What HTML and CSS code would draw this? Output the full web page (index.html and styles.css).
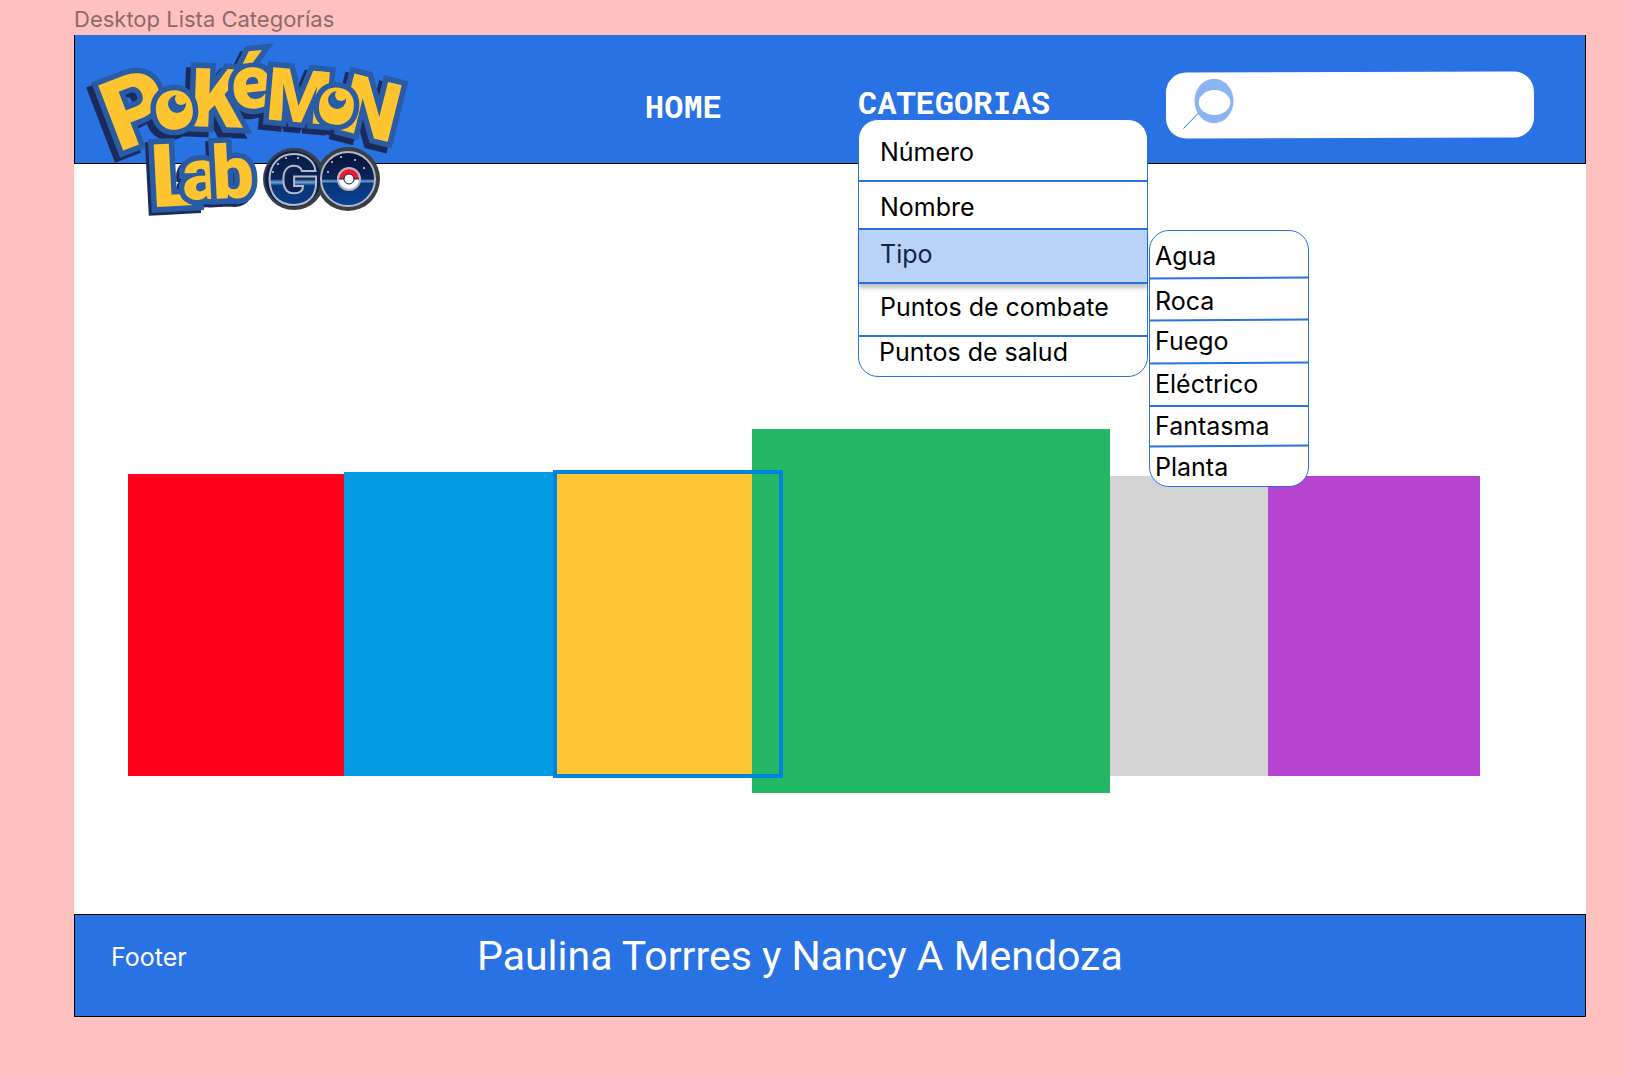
FILE: index.html
```html
<!DOCTYPE html>
<html lang="es">
<head>
<meta charset="utf-8">
<meta name="viewport" content="width=device-width, initial-scale=1">
<title>Desktop Lista Categorías</title>
<link rel="stylesheet" href="styles.css">
</head>
<body>
<p class="frame-label">Desktop Lista Categorías</p>
<div class="frame">
  <header class="header">
    <a class="logo" href="#" aria-label="Pokémon Lab GO">
      <svg class="logo-art" viewBox="86 35 320 182" width="320" height="182">
        <defs>
          <linearGradient id="night" x1="0" y1="0" x2="0" y2="1">
            <stop offset="0" stop-color="#06143a"/>
            <stop offset=".5" stop-color="#0a2558"/>
            <stop offset=".54" stop-color="#6fa6dc"/>
            <stop offset=".58" stop-color="#0a3674"/>
            <stop offset="1" stop-color="#05409a"/>
          </linearGradient>
          <g id="top-word">
            <text transform="translate(148 141) rotate(-21)" font-size="98">P</text>
            <text transform="translate(216 127) rotate(2)" font-size="82">K</text>
            <text transform="translate(177 129) rotate(-8)" font-size="72">o</text>
            <text transform="translate(254 108) rotate(-6)" font-size="76">é</text>
            <text transform="translate(297 122) rotate(5)" font-size="74">M</text>
            <text transform="translate(364 136) rotate(14)" font-size="82">N</text>
            <text transform="translate(334 124) rotate(8)" font-size="68">o</text>
          </g>
          <g id="lab-word">
            <text transform="translate(176 206) rotate(-3)" font-size="88">L</text>
            <text transform="translate(202 199) rotate(-2)" font-size="72">a</text>
            <text transform="translate(234 198) rotate(-3)" font-size="74">b</text>
          </g>
        </defs>
        <g class="word-depth">
          <use href="#top-word" x="-5" y="5"/>
          <use href="#lab-word" x="-3" y="3"/>
        </g>
        <g class="word-face">
          <use href="#top-word"/>
          <use href="#lab-word"/>
        </g>
        <g>
          <ellipse cx="176" cy="109" rx="14" ry="15" fill="#ffc531"/>
          <circle cx="177" cy="104" r="9" fill="#2a5ca5"/>
          <circle cx="181" cy="99" r="6" fill="#ffc531"/>
          <ellipse cx="337" cy="105" rx="13" ry="15" fill="#ffc531"/>
          <circle cx="337" cy="100" r="9" fill="#2a5ca5"/>
          <circle cx="341" cy="95" r="6" fill="#ffc531"/>
        </g>
        <circle cx="294" cy="179" r="31" fill="#3a3f45"/>
        <circle cx="348" cy="179" r="32" fill="#3a3f45"/>
        <circle cx="293" cy="179" r="28" fill="#0a2050"/>
        <circle cx="348" cy="179" r="27" fill="url(#night)" stroke="#b4bac4" stroke-width="2"/>
        <text class="go-letter" x="293" y="204" font-size="68">G</text>
        <g fill="#c9d8f0">
          <circle cx="278" cy="164" r="1"/><circle cx="286" cy="158" r="1"/><circle cx="298" cy="158" r="1"/>
          <circle cx="273" cy="172" r="1"/><circle cx="332" cy="162" r="1"/><circle cx="341" cy="157" r="1"/>
          <circle cx="355" cy="160" r="1"/><circle cx="364" cy="168" r="1"/><circle cx="328" cy="172" r="1"/>
        </g>
        <circle cx="349" cy="179" r="11" fill="#fff" stroke="#b4bac4" stroke-width="2"/>
        <path d="M339 179a10 10 0 0 1 20 0z" fill="#f0182c"/>
        <path d="M339 179h20" stroke="#0a2050"/>
        <circle cx="349" cy="179" r="5" fill="#fff" stroke="#0a2050"/>
      </svg>
    </a>
    <a class="nav-link" href="#">HOME</a>
    <nav class="categories">
      <a class="nav-link" href="#">CATEGORIAS</a>
      <ul class="menu">
        <li class="menu-row row-tall"><a href="#">Número</a></li>
        <li class="menu-row row-short"><a href="#">Nombre</a></li>
        <li class="menu-row row-active"><a href="#">Tipo</a></li>
        <li class="menu-row row-raised"><a href="#">Puntos de combate</a></li>
        <li class="menu-row row-last"><a href="#">Puntos de salud</a></li>
      </ul>
      <ul class="submenu">
        <li class="type-row type-first"><a href="#">Agua</a></li>
        <li class="type-row type-second"><a href="#">Roca</a></li>
        <li class="type-row"><a href="#">Fuego</a></li>
        <li class="type-row type-level"><a href="#">Eléctrico</a></li>
        <li class="type-row type-small"><a href="#">Fantasma</a></li>
        <li class="type-row type-last"><a href="#">Planta</a></li>
      </ul>
    </nav>
    <form class="search">
      <input class="search-input" type="search" aria-label="Buscar">
      <svg class="search-icon" viewBox="0 0 52 52" width="52" height="52" aria-hidden="true">
        <ellipse cx="31" cy="23" rx="19.500" ry="22.300" fill="#8cb4f3"/>
        <ellipse cx="31.500" cy="24.500" rx="15.800" ry="12.500" fill="#fff"/>
        <path d="M.5 50.500L15.500 35" stroke="#2872e4" fill="none"/>
      </svg>
    </form>
  </header>
  <main class="gallery">
    <div class="card card-red"></div>
    <div class="card card-blue"></div>
    <div class="card card-yellow"></div>
    <div class="card card-green"></div>
    <div class="card card-gray"></div>
    <div class="card card-purple"></div>
  </main>
  <footer class="footer">
    <span class="footer-label">Footer</span>
    <span class="footer-authors">Paulina Torrres y Nancy A Mendoza</span>
  </footer>
</div>
</body>
</html>
```
FILE: styles.css
```css
* {
  box-sizing: border-box;
}

body {
  margin: 0;
  padding: 0 40px 56px 74px;
  background: #ffc0c0;
  color: #000;
  font-family: Inter, "Liberation Sans", sans-serif;
  font-size: 25px;
  line-height: 30px;
}

a {
  color: inherit;
  text-decoration: none;
}

ul {
  margin: 0;
  padding: 0;
  list-style: none;
}

.frame-label {
  margin: 0;
  padding-top: 4px;
  height: 35px;
  font-size: 22px;
  color: #8d6a6a;
}

.frame {
  background: #fff;
}

.header {
  display: grid;
  grid-template-columns: 570fr 213fr 308fr 419fr;
  height: 129px;
  border: 1px solid #000;
  border-top: 0;
  background: #2872e4;
}

.logo {
  padding-left: 11px;
}

.logo-art {
  display: block;
  position: relative;
  z-index: 1;
  overflow: visible;
}

.logo-art text {
  font-family: Roboto, "Liberation Sans", sans-serif;
  font-weight: 900;
  text-anchor: middle;
}

.word-depth {
  fill: #1b2a5c;
  stroke: #1b2a5c;
  stroke-width: 11px;
}

.word-face {
  fill: #ffc531;
  stroke: #2a5ca5;
  stroke-width: 11px;
  paint-order: stroke;
}

.logo-art .go-letter {
  font-family: Inter, sans-serif;
  fill: url(#night);
  stroke: #b4bac4;
  stroke-width: 2px;
}

.nav-link {
  padding-top: 51px;
  font-family: "Roboto Mono", "DejaVu Sans Mono", monospace;
  font-size: 32px;
  font-weight: 700;
  line-height: 40px;
  color: #fff;
}

.categories {
  position: relative;
  padding-top: 47px;
}

.menu,
.submenu {
  position: absolute;
  border: 1px solid #2872e4;
  border-radius: 20px;
  background: #fff;
}

.menu {
  top: 84px;
  left: 0;
  z-index: 2;
  width: 290px;
}

.submenu {
  top: 195px;
  left: 291px;
  z-index: 2;
  width: 160px;
}

.menu-row {
  display: flex;
  align-items: center;
  height: 53px;
  padding: 0 21px;
  border-bottom: 2px solid #2872e4;
}

.row-tall {
  height: 62px;
  padding-top: 4px;
}

.row-short {
  height: 48px;
  padding-top: 4px;
}

.row-active {
  height: 54px;
  padding-bottom: 4px;
  background: #b8d2f8;
  color: #122545;
  box-shadow: 0 4px 4px rgba(0, 0, 0, .25);
}

.row-raised {
  padding-bottom: 6px;
}

.row-last {
  height: 39px;
  padding: 0 20px 10px;
  border-bottom: 0;
}

.type-row {
  position: relative;
  display: flex;
  align-items: center;
  height: 43px;
  padding: 0 5px 2px;
}

.type-row::after {
  content: "";
  position: absolute;
  right: 0;
  bottom: -1px;
  left: 0;
  height: 2px;
  background: #2872e4;
  transform: rotate(-.4deg);
}

.type-first {
  height: 47px;
  padding-top: 4px;
}

.type-second {
  height: 42px;
  padding-top: 6px;
}

.type-level::after {
  transform: none;
}

.type-small {
  height: 40px;
  padding-bottom: 0;
}

.type-last {
  height: 40px;
  padding: 2px 5px 0;
}

.type-last::after {
  content: none;
}

.categories .nav-link {
  display: block;
  padding-top: 0;
}

.search {
  position: relative;
  margin: 37px 51px 0 0;
  height: 66px;
}

.search-input {
  width: 100%;
  height: 100%;
  padding: 0 20px 0 76px;
  border: 0;
  border-radius: 20px;
  background: #fff;
  font: inherit;
  transform: rotate(-.2deg);
}

.search-icon {
  position: absolute;
  top: 6px;
  left: 17px;
}

.gallery {
  display: flex;
  align-items: flex-end;
  padding: 265px 106px 121px 54px;
}

.card {
  flex: 212 1 0;
  height: 300px;
  margin-bottom: 17px;
}

.card-red {
  flex-grow: 216;
  height: 302px;
  background: #ff001a;
}

.card-blue {
  height: 304px;
  background: #029ce4;
}

.card-yellow {
  position: relative;
  flex-grow: 196;
  height: 304px;
  background: #ffc533;
}

.card-yellow::after {
  content: "";
  position: absolute;
  z-index: 1;
  top: -2px;
  right: -31px;
  bottom: -2px;
  left: -3px;
  border: 4px solid #0283e2;
}

.card-green {
  flex-grow: 358;
  height: 364px;
  margin-bottom: 0;
  background: #24b766;
}

.card-gray {
  flex-grow: 158;
  background: #d4d4d4;
}

.card-purple {
  background: #b744d1;
}

.footer {
  display: grid;
  grid-template-columns: 366fr 1072fr;
  height: 103px;
  padding: 0 36px;
  border: 1px solid #000;
  background: #2872e4;
  color: #fff;
}

.footer-label {
  padding-top: 27px;
}

.footer-authors {
  padding-top: 17px;
  font-family: Roboto, "Liberation Sans", sans-serif;
  font-size: 41px;
  line-height: 48px;
}
```
